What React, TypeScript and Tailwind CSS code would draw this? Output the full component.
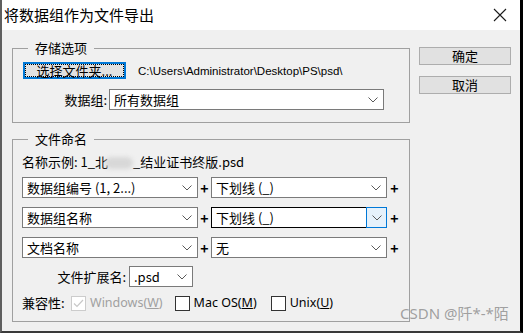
import React from 'react';

const cjk = { fontFamily: '"Noto Sans CJK SC", "Noto Sans", sans-serif' };

function Chevron() {
  return (
    <svg width="10" height="6" viewBox="0 0 10 6">
      <path d="M0.5 0.5 L5 5 L9.5 0.5" fill="none" stroke="#5a5a5a" strokeWidth="1" />
    </svg>
  );
}

function Select({
  value,
  width,
  focused = false,
}: {
  value: string;
  width: string;
  focused?: boolean;
}) {
  return (
    <div
      className={`${width} h-[21px] flex items-center bg-white border ${
        focused ? 'border-black' : 'border-[#7a7a7a]'
      }`}
    >
      <span className="flex-1 pl-[4px] text-[13px] leading-[16px] text-black whitespace-nowrap">{value}</span>
      {focused ? (
        <div className="w-[21px] h-[21px] -mr-px -my-px flex items-center justify-center bg-[#e5f1fb] border border-[#0078d7]">
          <Chevron />
        </div>
      ) : (
        <div className="w-[20px] h-full flex items-center justify-center">
          <Chevron />
        </div>
      )}
    </div>
  );
}

function Plus({ className = '' }: { className?: string }) {
  return (
    <span className={`block w-[13px] text-center text-[14px] leading-[16px] text-black font-semibold ${className}`}>+</span>
  );
}

function Group({ title, children, className = '' }: { title: string; children: React.ReactNode; className?: string }) {
  return (
    <div className={`border border-[#a0a0a0] flex flex-col ${className}`}>
      <span className="-mt-[9px] ml-[15px] px-[7px] w-fit bg-[#f0f0f0] text-[13px] leading-[16px] text-black">
        {title}
      </span>
      {children}
    </div>
  );
}

function CheckBox({
  label,
  underline,
  disabled = false,
  checked = false,
  className = '',
}: {
  label: string;
  underline: string;
  disabled?: boolean;
  checked?: boolean;
  className?: string;
}) {
  return (
    <div className={`flex items-center gap-[4px] ${className}`}>
      <div
        className={`w-[15px] h-[15px] flex items-center justify-center bg-white border ${
          disabled ? 'border-[#cccccc]' : 'border-[#333333]'
        }`}
      >
        {checked && (
          <svg width="11" height="9" viewBox="0 0 11 9">
            <path d="M1 4.5 L4 7.5 L10 1" fill="none" stroke="#c8c8c8" strokeWidth="1.2" />
          </svg>
        )}
      </div>
      <span
        className={`text-[12.5px] leading-[16px] ${disabled ? 'text-[#a0a0a0]' : 'text-black'}`}
        style={{ fontFamily: '"Noto Sans", sans-serif' }}
      >
        {label}(<span className="underline">{underline}</span>)
      </span>
    </div>
  );
}

const rows: [string, string, boolean][] = [
  ['数据组编号 (1, 2...)', '下划线 (_)', false],
  ['数据组名称', '下划线 (_)', true],
  ['文档名称', '无', false],
];

export default function App() {
  return (
    <div className="w-[523px] h-[333px] flex flex-col bg-[#f0f0f0] relative overflow-hidden" style={cjk}>
      {/* title bar */}
      <div className="h-[30px] bg-white flex items-center justify-between border-l-2 border-[#5f5f5f] border-r-[3px] border-r-black">
        <span className="pl-[2px] text-[15px] leading-[20px] text-black">将数据组作为文件导出</span>
        <svg width="14" height="14" viewBox="0 0 14 14" className="mr-[13px]">
          <path d="M1 1 L13 13 M13 1 L1 13" stroke="#1a1a1a" strokeWidth="1.1" />
        </svg>
      </div>

      {/* body */}
      <div className="flex-1 flex border-l-2 border-[#5f5f5f] border-r-[3px] border-r-black border-b-2 border-b-[#3a3a3a] pl-[10px] pt-[18px]">
        <div className="w-[398px] flex flex-col">
          <Group title="存储选项" className="h-[75px]">
            <div className="flex items-center mt-[6px] ml-[10px]">
              <button className="w-[103px] h-[17px] bg-[#e1e1e1] border-2 border-[#0078d7] flex items-center justify-center">
                <span className="w-full h-full border border-dotted border-black flex items-center justify-center text-[13px] leading-[14px] text-black">
                  选择文件夹...
                </span>
              </button>
              <span className="ml-[12px] text-[11.5px] leading-[14px] text-black" style={{ fontFamily: '"Liberation Sans", sans-serif' }}>
                C:\Users\Administrator\Desktop\PS\psd\
              </span>
            </div>
            <div className="flex items-center mt-[10px]">
              <span className="w-[94px] text-right text-[13px] leading-[16px] text-black">数据组:</span>
              <Select value="所有数据组" width="w-[275px] ml-[2px]" />
            </div>
          </Group>

          <Group title="文件命名" className="mt-[16px] h-[183px]">
            <div className="pl-[9px] flex flex-col">
              <span className="mt-[7px] text-[13px] leading-[16px] text-black whitespace-nowrap">
                名称示例: 1_<span className="inline-block w-[10px]">北</span>
                <span className="inline-block w-[28px] h-[12px] align-middle rounded-full bg-[#d8d8d8] blur-[2px]"></span>
                _结业证书终版.psd
              </span>
              <div className="flex flex-col gap-[9px] mt-[7px]">
                {rows.map(([a, b, f], i) => (
                  <div key={i} className="flex items-center">
                    <Select value={a} width="w-[176px]" />
                    <Plus />
                    <Select value={b} width="w-[176px]" focused={f} />
                    <Plus className="ml-[1px]" />
                  </div>
                ))}
              </div>
              <div className="flex items-center mt-[8px]">
                <span className="w-[104px] text-right text-[13px] leading-[16px] text-black">文件扩展名:</span>
                <Select value=".psd" width="w-[64px] ml-[3px]" />
              </div>
              <div className="flex items-center mt-[8px]">
                <span className="w-[49px] text-[13px] leading-[16px] text-black">兼容性:</span>
                <CheckBox label="Windows" underline="W" disabled checked />
                <CheckBox label="Mac OS" underline="M" className="ml-[12px]" />
                <CheckBox label="Unix" underline="U" className="ml-[14px]" />
              </div>
            </div>
          </Group>
        </div>

        <div className="ml-[9px] flex flex-col gap-[11px] -mt-[1px]">
          <button className="w-[92px] h-[18px] bg-[#e1e1e1] border border-[#adadad] text-[13px] leading-[14px] text-black">确定</button>
          <button className="w-[92px] h-[18px] bg-[#e1e1e1] border border-[#adadad] text-[13px] leading-[14px] text-black">取消</button>
        </div>
      </div>

      {/* watermark */}
      <span
        className="absolute left-[400px] top-[303px] text-[15px] leading-[20px] text-[#8a8a8a]/80"
        style={{ fontFamily: '"Noto Sans", "Noto Sans CJK SC", sans-serif' }}
      >
        CSDN @阡*-*陌
      </span>
    </div>
  );
}
